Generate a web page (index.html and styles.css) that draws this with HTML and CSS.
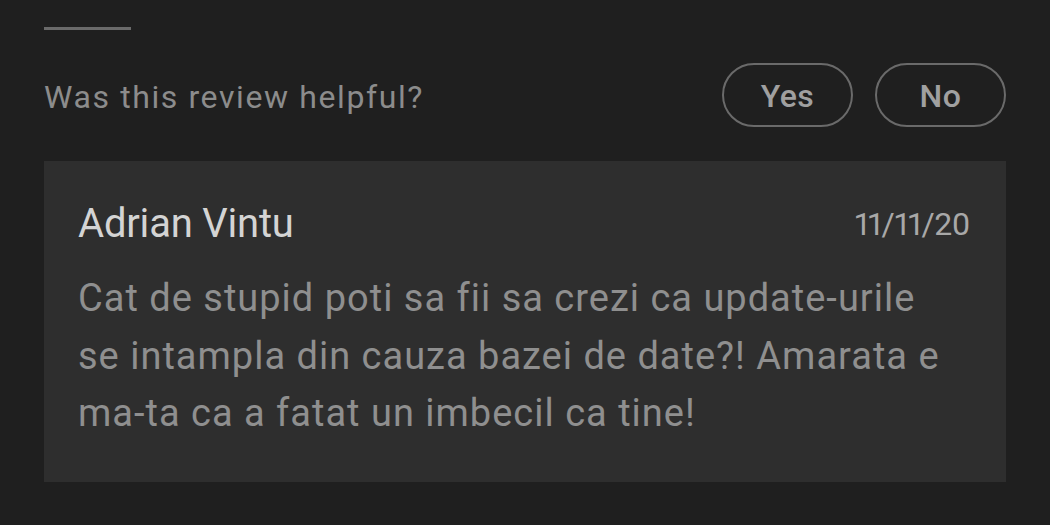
FILE: index.html
```html
<!DOCTYPE html>
<html>
<head>
<meta charset="utf-8">
<link rel="stylesheet" href="styles.css">
</head>
<body>
<div class="page">
  <div class="divider"></div>
  <div class="helpful">
    <span class="question">Was this review helpful?</span>
    <div class="actions">
      <button class="pill">Yes</button>
      <button class="pill">No</button>
    </div>
  </div>
  <div class="reply">
    <div class="reply-head">
      <span class="author">Adrian Vintu</span>
      <span class="date">11/11/20</span>
    </div>
    <p class="reply-body">Cat de stupid poti sa fii sa crezi ca update-urile<br>se intampla din cauza bazei de date?! Amarata e<br>ma-ta ca a fatat un imbecil ca tine!</p>
  </div>
</div>
</body>
</html>
```
FILE: styles.css
```css
html, body {
  margin: 0;
  padding: 0;
  background: #1f1f1f;
  font-family: Roboto, "Noto Sans", sans-serif;
}
.page {
  width: 962px;
  padding: 27px 44px 0 44px;
}
.divider {
  width: 87px;
  height: 3px;
  background: #6a6a6a;
}
.helpful {
  margin-top: 33px;
  display: flex;
  align-items: center;
  justify-content: space-between;
  height: 64px;
}
.question {
  font-size: 32px;
  line-height: 40px;
  padding-top: 4px;
  color: #8c8c8c;
  letter-spacing: 1.6px;
}
.actions {
  display: flex;
  gap: 22px;
}
.pill {
  box-sizing: border-box;
  width: 131px;
  height: 64px;
  border: 2px solid #6a6a6a;
  border-radius: 32px;
  background: transparent;
  color: #a0a0a0;
  font-family: inherit;
  font-size: 32px;
  font-weight: 500;
  letter-spacing: 0.5px;
  padding: 2px 0 0 0;
}
.reply {
  margin-top: 34px;
  background: #2e2e2e;
  box-sizing: border-box;
  height: 321px;
  padding: 39px 36px 0 34px;
}
.reply-head {
  display: flex;
  justify-content: space-between;
  align-items: flex-start;
}
.author {
  font-size: 40px;
  line-height: 48px;
  color: #d4d4d4;
  letter-spacing: -0.2px;
}
.date {
  font-size: 32px;
  line-height: 48px;
  color: #a8a8a8;
  font-variant-numeric: proportional-nums;
  letter-spacing: -0.4px;
}
.reply-body {
  margin: 22px 0 0 0;
  font-size: 38px;
  line-height: 57.5px;
  color: #8f8f8f;
  letter-spacing: 1px;
}
```
